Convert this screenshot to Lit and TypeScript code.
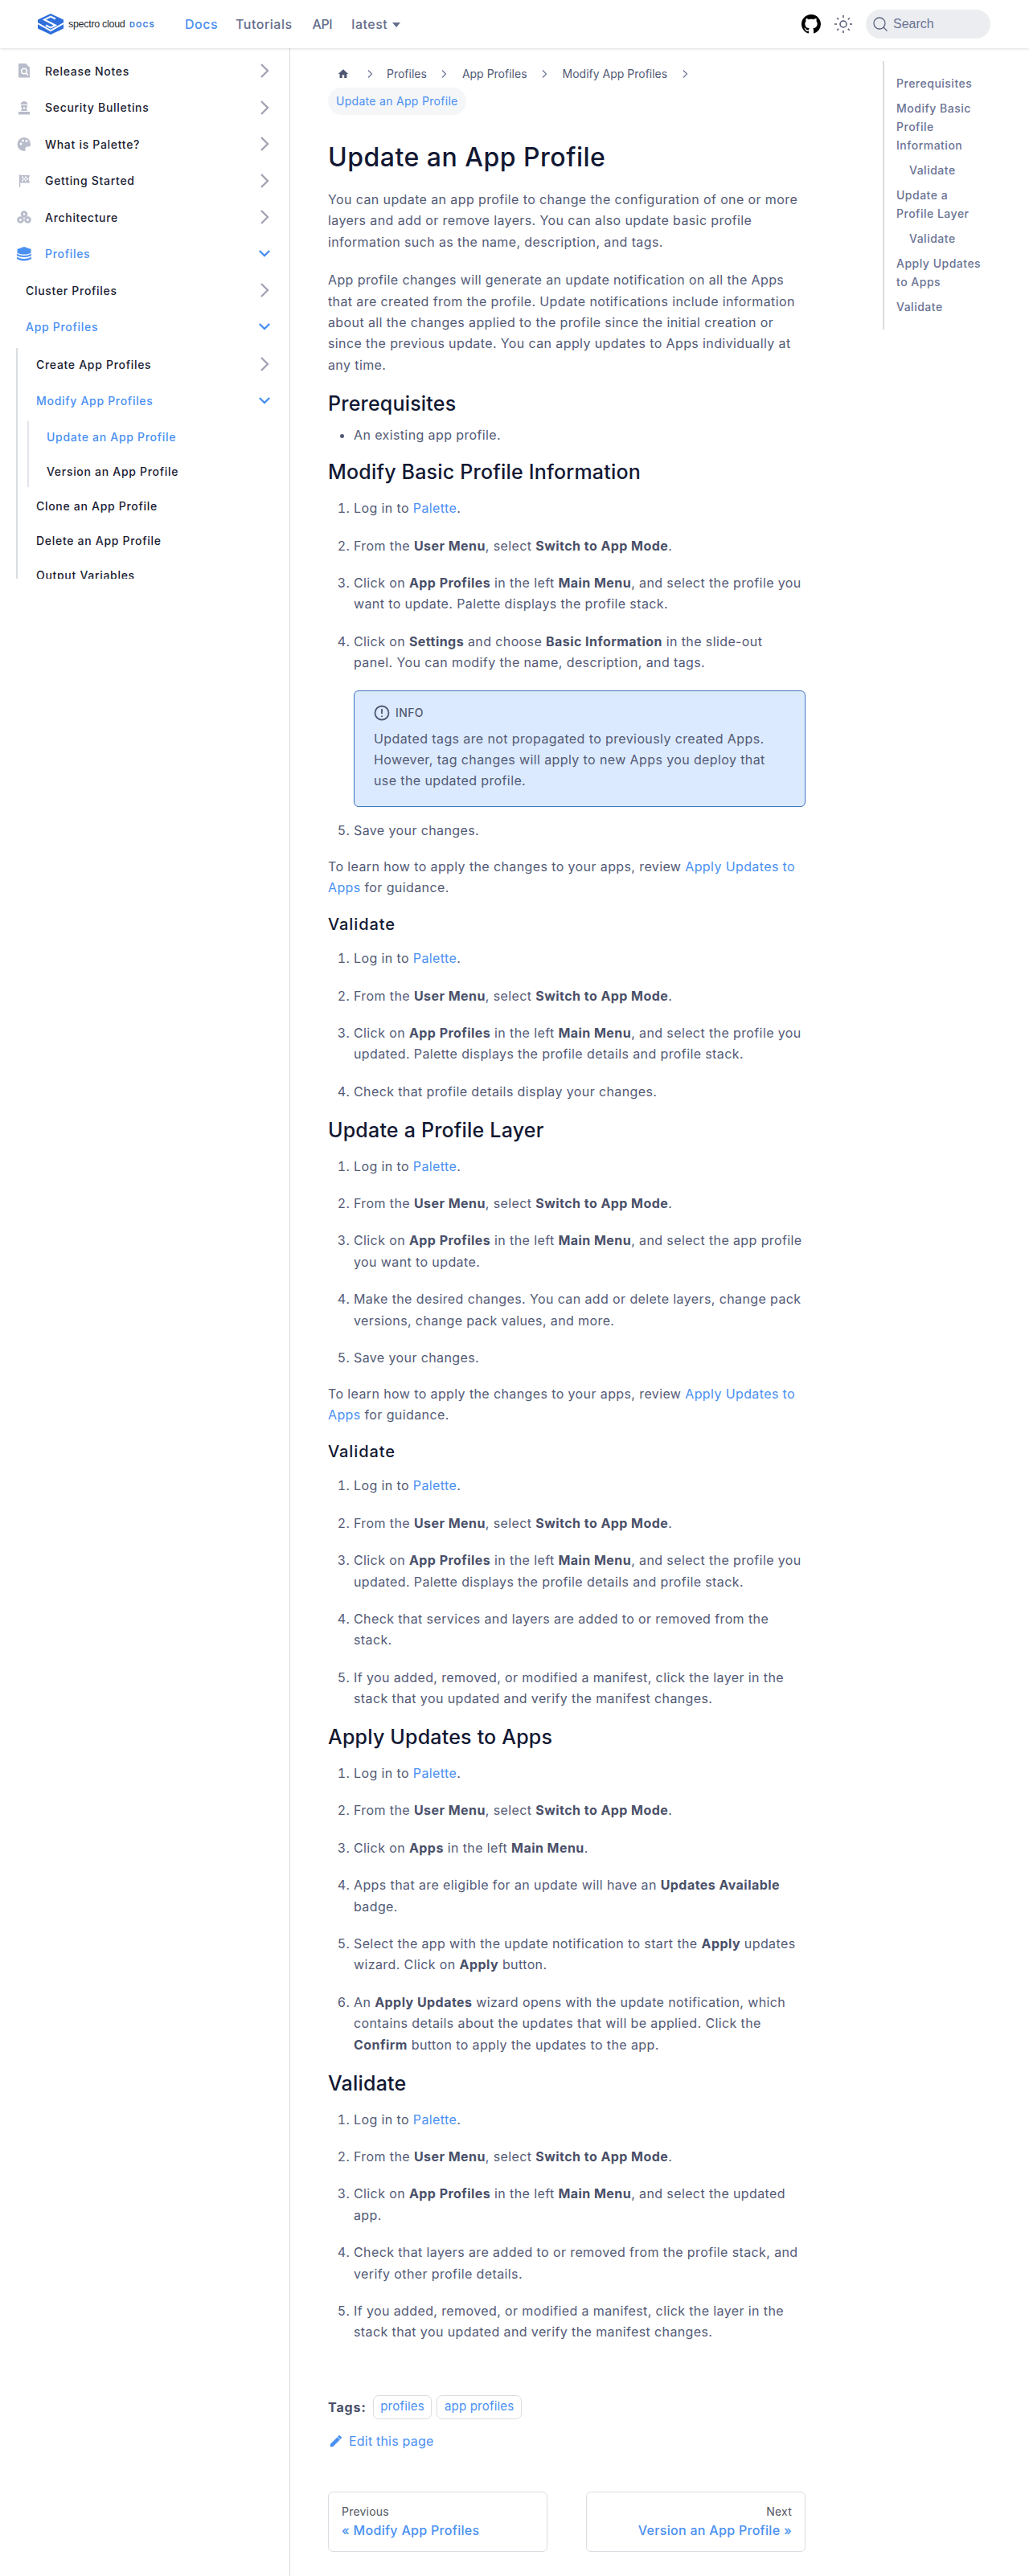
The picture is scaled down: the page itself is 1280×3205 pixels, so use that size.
import {LitElement, html, css, svg} from "lit"
import {customElement} from "lit/decorators.js"

const chevronRight = html`<svg class="chev" viewBox="0 0 12 20" width="12" height="20"><path d="M2 2l8 8-8 8" fill="none" stroke="currentColor" stroke-width="2.4"/></svg>`
const chevronDown = html`<svg class="chev open" viewBox="0 0 18 12" width="16" height="11"><path d="M2 2l7 7 7-7" fill="none" stroke="currentColor" stroke-width="2.6"/></svg>`

const icons: Record<string, any> = {
	release: svg`<path d="M2 0h9l5 5v12.500H2z" fill="#b8bccb"/><circle cx="9" cy="9.500" r="3.300" fill="none" stroke="#fff" stroke-width="1.600"/><path d="M11.500 12l2.500 2.500" stroke="#fff" stroke-width="1.600"/>`,
	security: svg`<path d="M4.500 5C5 2 7 1 9 1s4 1 4.500 4zM5 6h8v2l-1.500 1.500L13 13H5l1.500-3.500L5 8zM2 14h14v3.500H2z" fill="#b8bccb"/><path d="M8 8.500h2v2H8z" fill="#fff"/>`,
	palette: svg`<path d="M9 1a8.500 8.500 0 0 0 0 17c2 0 2-1.500 1.500-2.500S11 12.500 13 12.500h2c1.500 0 2-1.500 2-3C17 4.500 13.500 1 9 1z" fill="#b8bccb"/><circle cx="5" cy="9" r="1.400" fill="#fff"/><circle cx="7.500" cy="5" r="1.400" fill="#fff"/><circle cx="12" cy="5.500" r="1.400" fill="#fff"/>`,
	flag: svg`<path d="M3 1h1.200v16H3zM4 2h12l-1.500 4.500L16 11.500H4z" fill="#b8bccb"/><path d="M6 3.500h2v2H6zM10 3.500h2v2h-2zM8 5.500h2v2H8zM12 5.500h2v2h-2zM6 7.500h2v2H6zM10 7.500h2v2h-2z" fill="#fff"/>`,
	arch: svg`<circle cx="9" cy="5.500" r="4.300" fill="#b8bccb"/><circle cx="4.500" cy="12.500" r="4.300" fill="#b8bccb"/><circle cx="13.500" cy="12.500" r="4.300" fill="#b8bccb"/><circle cx="9" cy="5.500" r="1.300" fill="#fff"/><circle cx="4.500" cy="12.500" r="1.500" fill="#fff"/><circle cx="13.500" cy="12.500" r="1.500" fill="#fff"/>`,
	stack: svg`<path d="M9 0l8.500 3v4.500c-2 1.500-5 2-8.500 2s-6.500-.5-8.500-2V3z" fill="#4a90f2"/><path d="M0 8.500c2 1.500 5 2.500 9 2.500s7-1 9-2.500v2.300c-2 1.500-5 2.200-9 2.200s-7-.7-9-2.200zM0 12.500c2 1.500 5 2.500 9 2.500s7-1 9-2.500V15c-2 1.500-5 2.500-9 2.500S2 16.500 0 15z" fill="#4a90f2"/>`,
}

type Nav = {label: string, x: number, h: number, icon?: string, state?: "closed" | "open", active?: boolean}

const topItems: Nav[] = [
	{label: "Release Notes", x: 56, h: 45.500, icon: "release", state: "closed"},
	{label: "Security Bulletins", x: 56, h: 45.500, icon: "security", state: "closed"},
	{label: "What is Palette?", x: 56, h: 45.500, icon: "palette", state: "closed"},
	{label: "Getting Started", x: 56, h: 45.500, icon: "flag", state: "closed"},
	{label: "Architecture", x: 56, h: 45.500, icon: "arch", state: "closed"},
	{label: "Profiles", x: 56, h: 45.500, icon: "stack", state: "open", active: true},
	{label: "Cluster Profiles", x: 32, h: 45.500, state: "closed"},
	{label: "App Profiles", x: 32, h: 45.500, state: "open", active: true},
]

@customElement("app-root")
export class AppRoot extends LitElement {

	static styles = css`
	:host {
		display: block;
		height: 3205px;
		overflow: hidden;
		background: #fff;
		font-family: Inter, "Liberation Sans", sans-serif;
		font-size: 16px;
		letter-spacing: .39px;
		color: #535a76;
	}
	a { color: #4a90f2; text-decoration: none; }
	header {
		height: 60px;
		display: flex;
		align-items: center;
		padding: 0 48px 0 47px;
		box-sizing: border-box;
		box-shadow: 0 1px 3px rgba(0,0,0,.15);
		position: relative;
		background: #fff;
	}
	.logo { display: flex; align-items: center; width: 181px; }
	.logo-text { margin-left: 6px; font-family: "Liberation Sans", sans-serif; font-size: 12.500px; color: #2b2b33; letter-spacing: -.3px; white-space: nowrap; width: 76px; }
	.logo-docs { font-size: 9.500px; font-weight: 700; color: #3b7de0; letter-spacing: 1.100px; }
	.links { display: flex; gap: 25px; margin-left: 2px; font-weight: 500; color: #666e8c; align-items: center; letter-spacing: .5px; }
	.links .on { color: #4a90f2; margin-right: -3px; }
	.links .api { letter-spacing: -.4px; margin-right: -1px; }
	.caret { width: 0; height: 0; border: 5.500px solid transparent; border-top: 6px solid #666e8c; border-bottom: 0; margin-left: 6px; display: inline-block; vertical-align: 2px; }
	.right { margin-left: auto; display: flex; align-items: center; }
	.sun { margin-left: 17px; }
	.search {
		width: 155px;
		height: 36px;
		border-radius: 18px;
		background: #ebedf1;
		margin-left: 17px;
		display: flex;
		align-items: center;
		padding-left: 9px;
		box-sizing: border-box;
		font-family: "Liberation Sans", sans-serif;
		letter-spacing: 0;
		color: #6b7394;
		gap: 7px;
	}
	.body { display: flex; height: 3145px; }
	aside {
		width: 361px;
		box-sizing: border-box;
		border-right: 1px solid #dadde1;
		padding-top: 5.500px;
		flex: none;
	}
	.item {
		display: flex;
		align-items: center;
		color: #1b1d33;
		font-size: 14px;
		font-weight: 500;
		letter-spacing: .7px;
		padding-right: 25px;
		position: relative;
		white-space: nowrap;
	}
	.item.active { color: #4a90f2; }
	.item .ico { position: absolute; left: 21px; top: 50%; transform: translateY(-50%); }
	.chev { margin-left: auto; color: #a3a3b5; }
	.chev.open { color: #4a90f2; margin-right: -2px; }
	.sub { margin: 3.500px 0 0 20px; border-left: 2px solid #dadde1; height: 287px; overflow: hidden; }
	.sub2 { margin: 0 0 2px 12px; border-left: 2px solid #e3e5ea; height: 82px; }
	main { flex: none; width: 594px; margin-left: 47px; padding-top: 20px; }
	.crumbs { display: flex; flex-wrap: wrap; align-items: center; font-size: 14px; height: 23px; letter-spacing: 0; color: #525a76; }
	.crumbs svg.home { margin-left: 12px; }
	.crumbs .gap { width: 14px; }
	.crumbs .sep { width: 24px; display: flex; justify-content: center; }
	.crumbs .t { padding: 0 10px; }
	.crumbs .first { padding-left: 9px; }
	.pill { display: inline-block; background: #f5f6f8; color: #4a90f2; font-size: 14px; letter-spacing: .3px; line-height: 34px; height: 34px; padding: 0 10px; border-radius: 17px; margin-top: 6px; vertical-align: top; }
	h1 { font-size: 32px; font-weight: 500; color: #121833; margin: 33px 0 19px; line-height: 40px; letter-spacing: .5px; }
	h2 { font-size: 25px; font-weight: 500; color: #121833; margin: 18.500px 0 16px; line-height: 32px; letter-spacing: .2px; }
	h2.tight { margin-bottom: 10px; }
	h2.after-ul { margin-top: 17px; }
	h3 { font-size: 20px; font-weight: 500; color: #121833; margin: 19.500px 0 16px; line-height: 26px; letter-spacing: .9px; }
	p { margin: 0; line-height: 26.400px; }
	p + p { margin-top: 21px; }
	ol, ul { margin: 0; padding: 0 0 0 32px; }
	li { line-height: 26.400px; margin-top: 20px; }
	li:first-child { margin-top: 0; }
	b { font-weight: 700; color: #4a5069; letter-spacing: .45px; }
	.info {
		margin-top: 21px;
		background: #dbeafe;
		border: 1px solid #3f75bd;
		border-radius: 6px;
		padding: 16px 24px;
		height: 145px;
		box-sizing: border-box;
	}
	.info-h { display: flex; align-items: center; gap: 7px; font-size: 14px; font-weight: 500; line-height: 22px; margin-bottom: 8px; }
	.after-info { margin-top: 16.300px; }
	.learn { margin-top: 18.500px; }
	.tags { display: flex; align-items: center; margin-top: 65px; }
	.tags b { margin-right: 8px; letter-spacing: .9px; }
	.tag { border: 1px solid #dadde1; border-radius: 7px; color: #4a90f2; font-size: 15px; letter-spacing: .2px; height: 30px; box-sizing: border-box; line-height: 26px; padding: 0 8.500px; margin-right: 6px; }
	.edit { display: flex; align-items: center; gap: 8px; margin-top: 14px; color: #4a90f2; height: 26px; padding-left: 2px; letter-spacing: .2px; }
	.pager { display: flex; justify-content: space-between; margin-top: 50px; }
	.card { width: 273px; height: 75px; box-sizing: border-box; border: 1px solid #dadde1; border-radius: 6px; padding: 14px 16px; }
	.card small { display: block; font-size: 14px; line-height: 20px; color: #525560; letter-spacing: .2px; }
	.card a { display: block; font-weight: 500; line-height: 26px; letter-spacing: .3px; }
	.card.next { text-align: right; }
	.toc {
		margin-left: 96px;
		width: 130px;
		box-sizing: border-box;
		margin-top: 16px;
		height: 334px;
		border-left: 2px solid #dadde1;
		padding: 16px 0 0 15px;
		font-size: 14px;
		font-weight: 500;
		color: #6b7394;
		letter-spacing: .5px;
	}
	.toc div { line-height: 23px; margin-bottom: 8px; width: 112px; }
	.toc .in { padding-left: 16px; box-sizing: border-box; }
	`

	row(n: Nav) {
		return html`<div class="item ${n.active ? "active" : ""}" style="height:${n.h}px;padding-left:${n.x}px">
			${n.icon ? html`<svg class="ico" viewBox="0 0 18 18" width="18" height="18">${icons[n.icon]}</svg>` : ""}
			${n.label}
			${n.state == "open" ? chevronDown : n.state == "closed" ? chevronRight : ""}
		</div>`
	}

	login() {
		return html`<li>Log in to <a>Palette</a>.</li>
			<li>From the <b>User Menu</b>, select <b>Switch to App Mode</b>.</li>`
	}

	render() {
		const sep = html`<span class="sep"><svg width="7" height="12" viewBox="0 0 7 12"><path d="M1 1.500l4.500 4.500L1 10.500" fill="none" stroke="#6b7394" stroke-width="1.200"/></svg></span>`
		const applyLink = html`<p class="learn">To learn how to apply the changes to your apps, review <a>Apply Updates to Apps</a> for guidance.</p>`
		return html`
			<header>
				<div class="logo">
					<svg width="32" height="26" viewBox="0 0 32 26"><path d="M16 0l16 7.500v11L16 26 0 18.500v-11z" fill="#2f6fdc"/><path d="M22 6.500l-6-3-8 4 14 7-6 3-6-3M0 12l16 9 16-9" fill="none" stroke="#fff" stroke-width="2"/></svg>
					<span class="logo-text">spectro cloud</span>
					<span class="logo-docs">DOCS</span>
				</div>
				<nav class="links">
					<span class="on">Docs</span>
					<span>Tutorials</span>
					<span class="api">API</span>
					<span>latest<i class="caret"></i></span>
				</nav>
				<div class="right">
					<svg width="24" height="24" viewBox="0 0 16 16"><path fill="#000" d="M8 0C3.580 0 0 3.580 0 8c0 3.540 2.290 6.530 5.470 7.590.4.070.55-.17.55-.38 0-.19-.01-.82-.01-1.490-2.010.37-2.530-.49-2.690-.94-.09-.23-.48-.94-.82-1.130-.28-.15-.68-.52-.01-.53.63-.01 1.080.58 1.230.82.720 1.210 1.870.87 2.330.66.070-.52.280-.87.510-1.070-1.780-.2-3.640-.89-3.640-3.950 0-.87.310-1.590.820-2.150-.08-.2-.36-1.020.08-2.120 0 0 .67-.21 2.200.820.640-.18 1.320-.27 2-.27s1.360.09 2 .27c1.530-1.040 2.200-.820 2.200-.820.440 1.100.160 1.920.080 2.120.510.560.820 1.270.820 2.150 0 3.070-1.870 3.750-3.650 3.950.290.250.540.730.540 1.480 0 1.070-.010 1.930-.010 2.200 0 .210.150.460.550.380A8.010 8.010 0 0 0 16 8c0-4.420-3.580-8-8-8z"/></svg>
					<svg class="sun" width="22" height="22" viewBox="0 0 22 22" fill="none" stroke="#4f5672" stroke-width="1.500"><circle cx="11" cy="11" r="4"/><path d="M11 0v3M11 19v3M0 11h3M19 11h3M3.200 3.200l2 2M16.800 16.800l2 2M3.200 18.800l2-2M16.800 5.200l2-2"/></svg>
					<div class="search">
						<svg width="18" height="18" viewBox="0 0 18 18" fill="none" stroke="#5b6480" stroke-width="1.300"><circle cx="8" cy="8" r="7"/><path d="M13 13l4.500 4.500"/></svg>
						Search
					</div>
				</div>
			</header>
			<div class="body">
				<aside>
					${topItems.map(n => this.row(n))}
					<div class="sub">
						${this.row({label: "Create App Profiles", x: 23, h: 40, state: "closed"})}
						${this.row({label: "Modify App Profiles", x: 23, h: 51, state: "open", active: true})}
						<div class="sub2">
							${this.row({label: "Update an App Profile", x: 22, h: 38, active: true})}
							${this.row({label: "Version an App Profile", x: 22, h: 48})}
						</div>
						${this.row({label: "Clone an App Profile", x: 23, h: 43})}
						${this.row({label: "Delete an App Profile", x: 23, h: 43})}
						${this.row({label: "Output Variables", x: 23, h: 43})}
					</div>
				</aside>
				<main>
					<div class="crumbs">
						<svg class="home" width="14" height="14" viewBox="0 0 24 24"><path fill="#4f5672" d="M10 20v-6h4v6h5v-8h3L12 3 2 12h3v8z" transform="translate(-1 -1) scale(1.080)"/></svg>
						<span class="gap"></span>${sep}<span class="t first">Profiles</span>${sep}<span class="t">App Profiles</span>${sep}<span class="t">Modify App Profiles</span>${sep}
					</div>
					<span class="pill">Update an App Profile</span>
					<h1>Update an App Profile</h1>
					<p>You can update an app profile to change the configuration of one or more layers and add or remove layers. You can also update basic profile information such as the name, description, and tags.</p>
					<p>App profile changes will generate an update notification on all the Apps that are created from the profile. Update notifications include information about all the changes applied to the profile since the initial creation or since the previous update. You can apply updates to Apps individually at any time.</p>
					<h2 class="tight">Prerequisites</h2>
					<ul><li>An existing app profile.</li></ul>
					<h2 class="after-ul">Modify Basic Profile Information</h2>
					<ol>
						${this.login()}
						<li>Click on <b>App Profiles</b> in the left <b>Main Menu</b>, and select the profile you want to update. Palette displays the profile stack.</li>
						<li>Click on <b>Settings</b> and choose <b>Basic Information</b> in the slide-out<br>panel. You can modify the name, description, and tags.
							<div class="info">
								<div class="info-h"><svg width="20" height="20" viewBox="0 0 20 20" fill="none" stroke="#4f5672" stroke-width="1.800"><circle cx="10" cy="10" r="8.500"/><path d="M10 5v6M10 13.500v1.500"/></svg>INFO</div>
								Updated tags are not propagated to previously created Apps. However, tag changes will apply to new Apps you deploy that use the updated profile.
							</div>
						</li>
						<li class="after-info">Save your changes.</li>
					</ol>
					${applyLink}
					<h3>Validate</h3>
					<ol>
						${this.login()}
						<li>Click on <b>App Profiles</b> in the left <b>Main Menu</b>, and select the profile you updated. Palette displays the profile details and profile stack.</li>
						<li>Check that profile details display your changes.</li>
					</ol>
					<h2>Update a Profile Layer</h2>
					<ol>
						${this.login()}
						<li>Click on <b>App Profiles</b> in the left <b>Main Menu</b>, and select the app profile you want to update.</li>
						<li>Make the desired changes. You can add or delete layers, change pack versions, change pack values, and more.</li>
						<li>Save your changes.</li>
					</ol>
					${applyLink}
					<h3>Validate</h3>
					<ol>
						${this.login()}
						<li>Click on <b>App Profiles</b> in the left <b>Main Menu</b>, and select the profile you updated. Palette displays the profile details and profile stack.</li>
						<li>Check that services and layers are added to or removed from the stack.</li>
						<li>If you added, removed, or modified a manifest, click the layer in the stack that you updated and verify the manifest changes.</li>
					</ol>
					<h2>Apply Updates to Apps</h2>
					<ol>
						${this.login()}
						<li>Click on <b>Apps</b> in the left <b>Main Menu</b>.</li>
						<li>Apps that are eligible for an update will have an <b>Updates Available</b> badge.</li>
						<li>Select the app with the update notification to start the <b>Apply</b> updates wizard. Click on <b>Apply</b> button.</li>
						<li>An <b>Apply Updates</b> wizard opens with the update notification, which contains details about the updates that will be applied. Click the <b>Confirm</b> button to apply the updates to the app.</li>
					</ol>
					<h2>Validate</h2>
					<ol>
						${this.login()}
						<li>Click on <b>App Profiles</b> in the left <b>Main Menu</b>, and select the updated app.</li>
						<li>Check that layers are added to or removed from the profile stack, and verify other profile details.</li>
						<li>If you added, removed, or modified a manifest, click the layer in the stack that you updated and verify the manifest changes.</li>
					</ol>
					<div class="tags"><b>Tags:</b><span class="tag">profiles</span><span class="tag">app profiles</span></div>
					<div class="edit"><svg width="16" height="16" viewBox="0 0 40 40"><path fill="#4a90f2" d="M2 30v8h8l22-22-8-8zM37 11c1-1 1-2 0-3l-5-5c-1-1-2-1-3 0l-4 4 8 8z"/></svg>Edit this page</div>
					<div class="pager">
						<div class="card"><small>Previous</small><a>« Modify App Profiles</a></div>
						<div class="card next"><small>Next</small><a>Version an App Profile »</a></div>
					</div>
				</main>
				<div class="toc">
					<div>Prerequisites</div>
					<div>Modify Basic Profile Information</div>
					<div class="in">Validate</div>
					<div>Update a Profile Layer</div>
					<div class="in">Validate</div>
					<div>Apply Updates to Apps</div>
					<div>Validate</div>
				</div>
			</div>
		`
	}
}
